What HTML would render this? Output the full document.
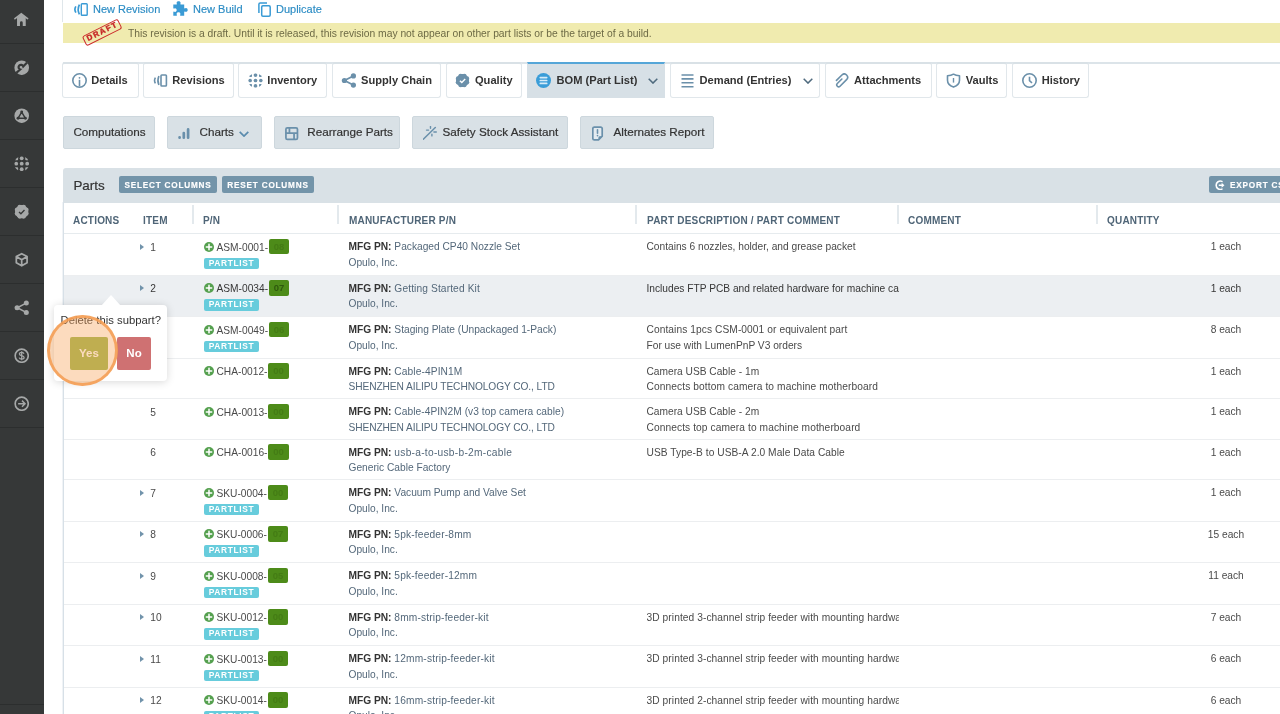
<!DOCTYPE html>
<html lang="en">
<head>
<meta charset="utf-8">
<title>BOM (Part List)</title>
<style>
*{box-sizing:border-box;margin:0;padding:0}
html,body{width:1280px;height:714px;overflow:hidden;background:#fff}
body{font-family:"Liberation Sans",sans-serif;font-size:11px;color:#4a4a4a;position:relative}
#wrap{position:absolute;left:0;top:0;width:1280px;height:714px;will-change:transform}
.abs{position:absolute}
/* sidebar */
#side{position:absolute;left:0;top:0;width:44px;height:714px;background:#363838;z-index:5}
#side .cell{position:absolute;left:0;width:44px;height:48px;border-bottom:1px solid #2c2e2e}
#side svg{position:absolute;left:13.650px;top:15.850px;width:15.400px;height:15.400px}
/* top links */
#leftline{position:absolute;left:62px;top:0;width:1px;height:22px;background:#dfe6ea}
.toplink{position:absolute;top:1px;height:16px;line-height:16px;font-size:11px;color:#2b8cc4;white-space:nowrap;-webkit-text-stroke:.15px #2b8cc4}
.topico{position:absolute}
#banner{position:absolute;left:63px;top:23px;width:1217px;height:20px;background:#f0ebaf}
#banner .msg{position:absolute;left:65px;top:-.2px;line-height:21px;font-size:10.3px;color:#6d6a45;white-space:nowrap}
#stamp{position:absolute;left:81.600px;top:27.200px;width:40px;height:10.500px;border:1.700px solid #cb2b2b;-webkit-text-stroke:.35px #c62626;border-radius:2.500px;color:#c62626;font-size:7.800px;font-weight:bold;letter-spacing:1.500px;line-height:7.900px;text-align:center;padding-left:1.500px;transform:rotate(-26.700deg);transform-origin:50% 50%}
/* tabs */
#tabline{position:absolute;left:63px;top:62px;width:1217px;height:2px;background:#dce4e9}
.tab{position:absolute;top:62px;height:36px;border:1px solid #e1e7eb;border-top:2px solid #d9e1e6;border-radius:3px;background:#fff;font-weight:bold;font-size:12px;color:#333;white-space:nowrap}
.tab span{position:absolute;top:7.700px;line-height:16px;font-size:11.100px}
.tab svg{position:absolute}
.tab.on{background:#d7e0e6;border-color:#d7e0e6;border-top:2px solid #55a6d8;border-radius:0}
/* toolbar buttons */
.tbtn{position:absolute;top:116px;height:33px;background:#d9e1e6;border:1px solid #cdd7dd;border-radius:2px;font-size:12px;color:#333;white-space:nowrap}
.tbtn span{position:absolute;top:7.400px;line-height:16px;font-size:11.700px;-webkit-text-stroke:.2px #333}
.tbtn svg{position:absolute}
/* panel */
#phead{position:absolute;left:63px;top:168px;width:1217px;height:34.500px;background:#d9e1e6;border-top-left-radius:3px}
#pleft{position:absolute;left:62px;top:202px;width:2px;height:512px;background:linear-gradient(90deg,#f0f3f6 1px,#d7e0e7 1px)}
.ptitle{position:absolute;left:73.400px;top:175.500px;-webkit-text-stroke:.2px #333;line-height:20px;font-size:13.400px;color:#333}
.sbtn{position:absolute;top:176.400px;height:16.800px;-webkit-text-stroke:.15px #fff;line-height:20.400px;overflow:hidden;background:#7394a9;border-radius:2px;color:#fff;font-weight:bold;font-size:8.200px;letter-spacing:.8px;text-align:center;white-space:nowrap}
#thead{position:absolute;left:0;top:202px;width:1280px;height:32px}
#thead::after{content:"";position:absolute;left:64px;right:0;bottom:0;height:1px;background:#e6ebee}
#thead span{position:absolute;top:11.800px;line-height:14px;font-size:10px;letter-spacing:.2px;font-weight:bold;color:#4f6577;white-space:nowrap}
#thead i{position:absolute;top:3px;width:2px;height:19px;background:#e3e9ed}
#rows{position:absolute;left:64px;top:234px;width:1216px}
.row{position:relative;height:41.500px;margin-left:-64px;width:1280px;background:transparent}
.row::after{content:"";position:absolute;left:64px;right:0;bottom:0;height:1px;background:#eceef0}
.row.s{height:40.500px}
.row.hl{background:linear-gradient(90deg,transparent 64px,#eceff2 64px)}
.row span{position:absolute;white-space:nowrap;line-height:14px;font-size:10.200px;color:#4a4a4a}
.row.hl .d1,.row.hl .q,.row.hl .num,.row.hl .pn{color:#363636}
.row.hl .rev{color:#2f5a0e}
.row .tri{position:absolute;left:140.200px;top:9.700px;width:0;height:0;border-left:4.600px solid #7193ab;border-top:3.700px solid transparent;border-bottom:3.700px solid transparent}
.row .num{left:150.300px;top:6.700px}
.row .plus{position:absolute;left:203.700px;top:7.600px;width:10px;height:10px}
.row .pn{left:216.500px;top:6.500px}
.row .rev{display:inline-block;vertical-align:top;margin-top:-1.600px;margin-left:1px;width:20.200px;height:15.5px;line-height:15.5px;background:#4d8b19;border-radius:2px;color:#447c15;font-size:9.500px;text-align:center;font-weight:bold}
.row .pl{left:204px;top:23.900px;width:55px;height:11.300px;line-height:10.700px;background:#67ccdc;border-radius:2px;color:#fff;font-weight:bold;font-size:8.400px;letter-spacing:.66px;text-align:center}
.row .m1{left:348.500px;top:6.300px;color:#54687a}
.row .m1 b{color:#333}
.row .m1 em{font-style:normal}
.row .m2{left:348.500px;top:21.700px;color:#54687a}
.row .d1{left:646.500px;top:6.300px;width:252px;overflow:hidden}
.row .d2{left:646.500px;top:21.700px;width:252px;overflow:hidden}
.row .q{left:1196px;top:6.300px;width:60px;text-align:center}
/* popover */
#pop{position:absolute;left:54px;top:305px;width:112.500px;height:75.500px;background:#fff;border-radius:4px;box-shadow:0 1px 8px rgba(0,0,0,.16);z-index:6}
#pop i{position:absolute;left:46.500px;top:-10.500px;width:0;height:0;border-left:10.500px solid transparent;border-right:10.500px solid transparent;border-bottom:11px solid #fff}
#pop .t{position:absolute;left:6.500px;top:7px;line-height:16px;font-size:11.300px;color:#333;white-space:nowrap}
#pop .y,#pop .n{position:absolute;top:32px;height:32.500px;line-height:32.500px;text-align:center;font-weight:bold;font-size:11.500px;border-radius:2px}
#pop .y{left:16px;width:38px;background:#9db74e;color:#fff}
#pop .n{left:63px;width:34px;background:#cf7172;color:#fff}
#ring{position:absolute;left:46.900px;top:314.700px;width:70.800px;height:71.500px;border-radius:50%;border:3px solid rgba(245,158,84,.88);background:rgba(247,160,84,.38);z-index:7}
</style>
</head>
<body>
<div id="wrap">
<div id="side">
  <div class="cell" style="top:-4px"><svg viewBox="0 0 16 16"><path fill="#a6a8a8" d="M3.150 5.800 7.600 2.200 12.200 5.800V14.500H9.100V11.100a1.450 1.450 0 0 0-2.900 0V14.500H3.150z"/><path d="M1 6.900 7.600 1.900 14.100 6.800" fill="none" stroke="#a6a8a8" stroke-width="1.700" stroke-linecap="round" stroke-linejoin="miter"/></svg></div>
  <div class="cell" style="top:44px"><svg viewBox="0 0 16 16"><circle cx="8" cy="8" r="7.6" fill="#a6a8a8"/><path d="M2.400 13.400 6.400 9.900a2.500 2.500 0 1 1 3.200-3.200L13.600 2.600" fill="none" stroke="#363838" stroke-width="2.300"/></svg></div>
  <div class="cell" style="top:92px"><svg viewBox="0 0 16 16"><circle cx="8" cy="8" r="7.6" fill="#a6a8a8"/><path d="M8 4.2 4.3 10.6h7.4z" fill="none" stroke="#363838" stroke-width="1.5" stroke-linejoin="round"/><circle cx="8" cy="4.2" r="1.5" fill="#363838"/><circle cx="4.2" cy="10.6" r="1.5" fill="#363838"/><circle cx="11.8" cy="10.6" r="1.5" fill="#363838"/></svg></div>
  <div class="cell" style="top:140px"><svg viewBox="0 0 16 16"><clipPath id="cc"><circle cx="8" cy="8" r="7.800"/></clipPath><g clip-path="url(#cc)" fill="#a6a8a8"><rect x=".3" y=".3" width="4" height="4" rx=".9"/><circle cx="8" cy="2.300" r="2"/><rect x="11.700" y=".3" width="4" height="4" rx=".9"/><circle cx="2.300" cy="8" r="2"/><circle cx="8" cy="8" r="2"/><circle cx="13.700" cy="8" r="2"/><rect x=".3" y="11.700" width="4" height="4" rx=".9"/><circle cx="8" cy="13.700" r="2"/><rect x="11.700" y="11.700" width="4" height="4" rx=".9"/></g></svg></div>
  <div class="cell" style="top:188px"><svg viewBox="0 0 16 16"><circle cx="8.00" cy="8.00" r="6.90" fill="#a6a8a8"/><circle cx="12.71" cy="9.95" r="2.50" fill="#a6a8a8"/><circle cx="9.95" cy="12.71" r="2.50" fill="#a6a8a8"/><circle cx="6.05" cy="12.71" r="2.50" fill="#a6a8a8"/><circle cx="3.29" cy="9.95" r="2.50" fill="#a6a8a8"/><circle cx="3.29" cy="6.05" r="2.50" fill="#a6a8a8"/><circle cx="6.05" cy="3.29" r="2.50" fill="#a6a8a8"/><circle cx="9.95" cy="3.29" r="2.50" fill="#a6a8a8"/><circle cx="12.71" cy="6.05" r="2.50" fill="#a6a8a8"/><path d="M5.2 8.3 7.2 10.2 10.9 6.3" fill="none" stroke="#363838" stroke-width="1.4"/></svg></div>
  <div class="cell" style="top:236px"><svg viewBox="0 0 16 16"><path d="M8 1.700 13.600 4.800v6.400L8 14.300 2.400 11.200V4.800zM2.400 4.800 8 8l5.600-3.200M8 8v6.300" fill="none" stroke="#a6a8a8" stroke-width="1.800" stroke-linejoin="round"/></svg></div>
  <div class="cell" style="top:284px"><svg viewBox="0 0 16 16"><path d="M12.6 3.2 3.4 8l9.2 4.8" fill="none" stroke="#a6a8a8" stroke-width="1.6"/><circle cx="12.8" cy="3.1" r="2.6" fill="#a6a8a8"/><circle cx="3.2" cy="8" r="2.6" fill="#a6a8a8"/><circle cx="12.8" cy="12.9" r="2.6" fill="#a6a8a8"/></svg></div>
  <div class="cell" style="top:332px"><svg viewBox="0 0 16 16"><circle cx="8" cy="8" r="6.800" fill="none" stroke="#a6a8a8" stroke-width="1.700"/><path d="M10.4 5.9C10 4.9 9 4.6 8 4.6c-1.4 0-2.4.6-2.4 1.7 0 2.4 4.9 1 4.9 3.5 0 1-1 1.7-2.5 1.7-1.200 0-2.200-.4-2.600-1.500M8 3.300v9.400" fill="none" stroke="#a6a8a8" stroke-width="1.3"/></svg></div>
  <div class="cell" style="top:380px"><svg viewBox="0 0 16 16"><circle cx="8" cy="8" r="6.800" fill="none" stroke="#a6a8a8" stroke-width="1.700"/><path d="M4.300 8h7M8.300 4.800 11.500 8 8.300 11.200" fill="none" stroke="#a6a8a8" stroke-width="1.5"/></svg></div>
  <div class="cell" style="top:657px"></div>
</div>

<div id="leftline"></div>
<svg class="topico" viewBox="0 0 15 13" style="left:73px;top:2.500px;width:15px;height:13px"><rect x="8.300" y=".7" width="5.900" height="11.600" rx=".8" fill="none" stroke="#3a9bd5" stroke-width="1.400"/><path d="M6.400 1.600Q4 6.500 6.400 11.400" fill="none" stroke="#3a9bd5" stroke-width="1.700"/><path d="M2.900 3.400Q.9 6.500 2.900 9.600" fill="none" stroke="#3a9bd5" stroke-width="1.700"/></svg><svg class="topico" viewBox="0 0 15 15" style="left:172.700px;top:1.300px;width:15px;height:15px"><path fill="#3a9bd5" d="M5.600 0.300c1.200 0 2 .7 2 1.600 0 .5-.3.800-.3 1.200 0 .3.200.5.600.5h3.300v3.200c0 .4.200.6.500.6.400 0 .7-.4 1.300-.4 1 0 1.700.8 1.700 1.900s-.7 1.900-1.700 1.900c-.6 0-.9-.4-1.300-.4-.3 0-.5.200-.5.600v3.700H7.600c-.4 0-.6-.2-.6-.5 0-.4.400-.7.400-1.300 0-.9-.8-1.600-1.900-1.600s-1.900.7-1.900 1.600c0 .6.400.9.400 1.300 0 .3-.2.500-.6.500H.3v-3.500c0-.4.200-.6.500-.6.400 0 .7.400 1.300.4.900 0 1.600-.8 1.600-1.900S3 7.200 2.100 7.200c-.6 0-.9.400-1.300.4-.3 0-.5-.2-.5-.6V3.600h3.100c.4 0 .6-.2.6-.5 0-.4-.4-.7-.4-1.200 0-.9.800-1.600 2-1.600z"/></svg><svg class="topico" viewBox="0 0 13 15" style="left:257.500px;top:1.500px;width:13px;height:15px"><rect x="3.700" y="3.700" width="8.500" height="10.500" rx="1.200" fill="none" stroke="#3a9bd5" stroke-width="1.500"/><path d="M9 1H2.200A1.300 1.300 0 0 0 .9 2.300V11" fill="none" stroke="#3a9bd5" stroke-width="1.500"/></svg>
<div class="toplink" style="left:93px">New Revision</div>
<div class="toplink" style="left:193px">New Build</div>
<div class="toplink" style="left:276px">Duplicate</div>

<div id="banner"><div class="msg">This revision is a draft. Until it is released, this revision may not appear on other part lists or be the target of a build.</div></div>
<div id="stamp">DRAFT</div>

<div id="tabline"></div>
<div class="tab" style="left:62px;width:76.500px"><svg viewBox="0 0 15 15" style="left:8.5px;top:8.8px;width:15px;height:15px"><circle cx="7.500" cy="7.500" r="6.700" fill="none" stroke="#6b90aa" stroke-width="1.600"/><circle cx="7.500" cy="4.800" r=".9" fill="#6b90aa"/><path d="M7.500 6.800v6.600" stroke="#6b90aa" stroke-width="1.600"/></svg><span style="left:28.300px">Details</span></div>
<div class="tab" style="left:143px;width:90.5px"><svg viewBox="0 0 15 15" style="left:8.5px;top:8.8px;width:15px;height:15px"><rect x="8" y="2" width="5.400" height="11" rx=".8" fill="none" stroke="#6b90aa" stroke-width="1.600"/><path d="M5.900 3Q3.900 7.500 5.900 12" fill="none" stroke="#6b90aa" stroke-width="1.600"/><path d="M2.400 4.600Q.7 7.500 2.400 10.400" fill="none" stroke="#6b90aa" stroke-width="1.600"/></svg><span style="left:28.300px">Revisions</span></div>
<div class="tab" style="left:238px;width:89px"><svg viewBox="0 0 15 15" style="left:8.5px;top:8.8px;width:15px;height:15px"><clipPath id="c2"><circle cx="7.500" cy="7.500" r="7.300"/></clipPath><g clip-path="url(#c2)" fill="#6b90aa"><rect x=".3" y=".3" width="3.700" height="3.700" rx=".8"/><circle cx="7.500" cy="2.100" r="1.850"/><rect x="11" y=".3" width="3.700" height="3.700" rx=".8"/><circle cx="2.100" cy="7.500" r="1.850"/><circle cx="7.500" cy="7.500" r="1.850"/><circle cx="12.900" cy="7.500" r="1.850"/><rect x=".3" y="11" width="3.700" height="3.700" rx=".8"/><circle cx="7.500" cy="12.900" r="1.850"/><rect x="11" y="11" width="3.700" height="3.700" rx=".8"/></g></svg><span style="left:28.300px">Inventory</span></div>
<div class="tab" style="left:331.8px;width:109.1px"><svg viewBox="0 0 15 15" style="left:8.5px;top:8.8px;width:15px;height:15px"><path d="M12.300 3 3.500 7.500l8.800 4.500" fill="none" stroke="#6b90aa" stroke-width="1.800"/><circle cx="12.400" cy="2.900" r="2.600" fill="#6b90aa"/><circle cx="3.400" cy="7.500" r="2.600" fill="#6b90aa"/><circle cx="12.400" cy="12.100" r="2.600" fill="#6b90aa"/></svg><span style="left:28.300px">Supply Chain</span></div>
<div class="tab" style="left:445.7px;width:76.2px"><svg viewBox="0 0 15 15" style="left:8.5px;top:8.8px;width:15px;height:15px"><circle cx="7.50" cy="7.50" r="6.45" fill="#6b90aa"/><circle cx="11.89" cy="9.32" r="2.35" fill="#6b90aa"/><circle cx="9.32" cy="11.89" r="2.35" fill="#6b90aa"/><circle cx="5.68" cy="11.89" r="2.35" fill="#6b90aa"/><circle cx="3.11" cy="9.32" r="2.35" fill="#6b90aa"/><circle cx="3.11" cy="5.68" r="2.35" fill="#6b90aa"/><circle cx="5.68" cy="3.11" r="2.35" fill="#6b90aa"/><circle cx="9.32" cy="3.11" r="2.35" fill="#6b90aa"/><circle cx="11.89" cy="5.68" r="2.35" fill="#6b90aa"/><path d="M4.900 7.700 6.800 9.500 10.200 5.900" fill="none" stroke="#fff" stroke-width="1.400"/></svg><span style="left:28.300px">Quality</span></div>
<div class="tab on" style="left:527.3px;width:137.7px"><svg viewBox="0 0 15 15" style="left:7.700px;top:8.800px;width:15px;height:15px"><circle cx="7.500" cy="7.500" r="7.500" fill="#3a9dd8"/><path d="M4.300 4.600h6.400M4.300 7.500h6.400M4.300 10.400h6.400" stroke="#d6ecf8" stroke-width="1.700" stroke-linecap="round"/></svg><span style="left:28.300px">BOM (Part List)</span><svg viewBox="0 0 10 6" style="left:119.500px;top:13.700px;width:10px;height:6px"><path d="M.7.800 5 5.100 9.300.8" fill="none" stroke="#4f6a7e" stroke-width="1.500"/></svg></div>
<div class="tab" style="left:670.3px;width:149.5px"><svg viewBox="0 0 15 15" style="left:8.5px;top:8.8px;width:15px;height:15px"><path d="M1.500 2h12M1.500 5.900h12M1.500 9.800h12M1.500 13.700h12" stroke="#6b90aa" stroke-width="1.600"/></svg><span style="left:28.300px">Demand (Entries)</span><svg viewBox="0 0 10 6" style="left:131.300px;top:13.700px;width:10px;height:6px"><path d="M.7.800 5 5.100 9.300.8" fill="none" stroke="#4f6a7e" stroke-width="1.500"/></svg></div>
<div class="tab" style="left:824.7px;width:106.9px"><svg viewBox="0 0 15 15" style="left:8.5px;top:8.8px;width:15px;height:15px"><g transform="translate(10.250 4.300) rotate(45)"><path d="M-3.300 7.700V0A3.300 3.300 0 0 1 3.300 0V9.300A1.900 1.900 0 0 1-.5 9.300V2.900" fill="none" stroke="#6b90aa" stroke-width="1.600" stroke-linecap="round"/></g></svg><span style="left:28.300px">Attachments</span></div>
<div class="tab" style="left:936.4px;width:70.8px"><svg viewBox="0 0 15 15" style="left:8.5px;top:8.8px;width:15px;height:15px"><path d="M7.500 1.200C5.800 2.300 3.800 2.700 1.500 2.700v4.500c0 3.300 2.400 5.600 6 6.900 3.600-1.300 6-3.600 6-6.900V2.700c-2.300 0-4.300-.4-6-1.500z" fill="none" stroke="#6b90aa" stroke-width="1.600" stroke-linejoin="round"/><path d="M7.500 5v4.600" stroke="#6b90aa" stroke-width="1.400"/></svg><span style="left:28.300px">Vaults</span></div>
<div class="tab" style="left:1012.4px;width:76.6px"><svg viewBox="0 0 15 15" style="left:8.5px;top:8.8px;width:15px;height:15px"><circle cx="7.500" cy="7.500" r="6.700" fill="none" stroke="#6b90aa" stroke-width="1.600"/><path d="M7.500 3.800v3.900l2.500 2.300" fill="none" stroke="#6b90aa" stroke-width="1.600"/></svg><span style="left:28.300px">History</span></div>

<div class="tbtn" style="left:62.9px;width:91.7px"><span style="left:9.5px">Computations</span></div>
<div class="tbtn" style="left:167.2px;width:94.5px"><svg viewBox="0 0 12 13" style="left:10.300px;top:10.500px;width:12px;height:13px"><path d="M1.600 9.300v.4M5.800 5.100v4.600M10.100 1.400v8.300" stroke="#6a90ab" stroke-width="2.700" stroke-linecap="round"/></svg><span style="left:31.300px">Charts</span><svg viewBox="0 0 10 6" style="left:71px;top:13.900px;width:10px;height:6px"><path d="M.7.800 5 5.100 9.300.8" fill="none" stroke="#5a8bad" stroke-width="1.700"/></svg></div>
<div class="tbtn" style="left:274px;width:125.8px"><svg viewBox="0 0 13 13" style="left:10.200px;top:10.300px;width:13.400px;height:13.400px"><rect x=".9" y=".9" width="11.200" height="11.200" rx="1.400" fill="none" stroke="#6a90ab" stroke-width="1.700"/><path d="M.9 5.900h11.200M4.300.9v5M8.800 5.900v6.200" stroke="#6a90ab" stroke-width="1.700"/></svg><span style="left:32.2px">Rearrange Parts</span></div>
<div class="tbtn" style="left:412px;width:155.5px"><svg viewBox="0 0 15 15" style="left:10px;top:9px;width:15px;height:15px"><path d="M.3 13.300 12.300 1.500" stroke="#6a90ab" stroke-width="1.500" stroke-linecap="round"/><path d="M7.500.4v1.900M3.500 4.100h2.100M10.900 6h2.400M8.900 8.300v1.600" stroke="#6a90ab" stroke-width="1.400" stroke-linecap="round"/></svg><span style="left:29.5px">Safety Stock Assistant</span></div>
<div class="tbtn" style="left:580px;width:133.5px"><svg viewBox="0 0 12 15" style="left:11px;top:8.500px;width:12px;height:15px"><path d="M2.300 1.100h6.400a1.500 1.500 0 0 1 1.500 1.500v7.600l-3.700 3.700H2.300a1.500 1.500 0 0 1-1.500-1.500V2.600a1.500 1.500 0 0 1 1.500-1.500z" fill="#e4ebf0" stroke="#6a90ab" stroke-width="1.700" stroke-linejoin="round"/><path d="M10.200 10.200H7.700a1.200 1.200 0 0 0-1.200 1.200v2.500z" fill="#6a90ab"/><path d="M5.500 3.700v3.500" stroke="#6a90ab" stroke-width="1.600" stroke-linecap="round"/><circle cx="5.500" cy="9.600" r=".85" fill="#6a90ab"/></svg><span style="left:32.5px">Alternates Report</span></div>

<!--PANEL_START-->
<div id="phead"></div>
<div id="pleft"></div>
<div class="ptitle">Parts</div>
<div class="sbtn" style="left:119px;width:98px">SELECT COLUMNS</div>
<div class="sbtn" style="left:222px;width:92px">RESET COLUMNS</div>
<div class="sbtn" style="left:1209px;width:90px;text-align:left;padding-left:21px">EXPORT CSV<svg viewBox="0 0 10 10" style="position:absolute;left:6.300px;top:3.400px;width:10.500px;height:10.500px"><path d="M6.6 1.3A4 4 0 1 0 6.6 8.7" fill="none" stroke="#fff" stroke-width="1.5" stroke-linecap="round"/><path d="M3.6 5h3.2" stroke="#fff" stroke-width="1.5"/><path d="M6.3 2.6 9 5 6.3 7.4z" fill="#fff"/></svg></div>

<div id="thead">
  <span style="left:73px">ACTIONS</span>
  <span style="left:143px">ITEM</span>
  <span style="left:203px">P/N</span>
  <span style="left:349px">MANUFACTURER P/N</span>
  <span style="left:647px">PART DESCRIPTION / PART COMMENT</span>
  <span style="left:908px">COMMENT</span>
  <span style="left:1107px">QUANTITY</span>
  <i style="left:192px"></i><i style="left:337px"></i><i style="left:635px"></i><i style="left:897px"></i><i style="left:1096px"></i>
</div>
<div id="rows">
<div class="row"><i class="tri"></i><span class="num">1</span><svg class="plus" viewBox="0 0 10 10"><circle cx="5" cy="5" r="5" fill="#55a04f"/><path d="M5 2.3v5.4M2.3 5h5.4" stroke="#fff" stroke-width="1.5" stroke-linecap="round"/></svg><span class="pn">ASM-0001-<b class="rev">08</b></span><span class="pl">PARTLIST</span><span class="m1"><b>MFG PN:</b> Packaged CP40 Nozzle Set</span><span class="m2">Opulo, Inc.</span><span class="d1">Contains 6 nozzles, holder, and grease packet</span><span class="q">1 each</span></div>
<div class="row hl"><i class="tri"></i><span class="num">2</span><svg class="plus" viewBox="0 0 10 10"><circle cx="5" cy="5" r="5" fill="#55a04f"/><path d="M5 2.3v5.4M2.3 5h5.4" stroke="#fff" stroke-width="1.5" stroke-linecap="round"/></svg><span class="pn">ASM-0034-<b class="rev">07</b></span><span class="pl">PARTLIST</span><span class="m1"><b>MFG PN:</b> <em style="letter-spacing:0.12px">Getting Started Kit</em></span><span class="m2">Opulo, Inc.</span><span class="d1">Includes FTP PCB and related hardware for machine calibration</span><span class="q">1 each</span></div>
<div class="row"><svg class="plus" viewBox="0 0 10 10"><circle cx="5" cy="5" r="5" fill="#55a04f"/><path d="M5 2.3v5.4M2.3 5h5.4" stroke="#fff" stroke-width="1.5" stroke-linecap="round"/></svg><span class="pn">ASM-0049-<b class="rev">06</b></span><span class="pl">PARTLIST</span><span class="m1"><b>MFG PN:</b> Staging Plate (Unpackaged 1-Pack)</span><span class="m2">Opulo, Inc.</span><span class="d1" style="letter-spacing:0.08px">Contains 1pcs CSM-0001 or equivalent part</span><span class="d2">For use with LumenPnP V3 orders</span><span class="q">8 each</span></div>
<div class="row s"><svg class="plus" viewBox="0 0 10 10"><circle cx="5" cy="5" r="5" fill="#55a04f"/><path d="M5 2.3v5.4M2.3 5h5.4" stroke="#fff" stroke-width="1.5" stroke-linecap="round"/></svg><span class="pn">CHA-0012-<b class="rev">00</b></span><span class="m1"><b>MFG PN:</b> <em style="letter-spacing:0.1px">Cable-4PIN1M</em></span><span class="m2" style="letter-spacing:-.09px">SHENZHEN AILIPU TECHNOLOGY CO., LTD</span><span class="d1">Camera USB Cable - 1m</span><span class="d2" style="letter-spacing:0.1px">Connects bottom camera to machine motherboard</span><span class="q">1 each</span></div>
<div class="row s"><span class="num">5</span><svg class="plus" viewBox="0 0 10 10"><circle cx="5" cy="5" r="5" fill="#55a04f"/><path d="M5 2.3v5.4M2.3 5h5.4" stroke="#fff" stroke-width="1.5" stroke-linecap="round"/></svg><span class="pn">CHA-0013-<b class="rev">00</b></span><span class="m1"><b>MFG PN:</b> <em style="letter-spacing:0.05px">Cable-4PIN2M (v3 top camera cable)</em></span><span class="m2" style="letter-spacing:-.09px">SHENZHEN AILIPU TECHNOLOGY CO., LTD</span><span class="d1">Camera USB Cable - 2m</span><span class="d2" style="letter-spacing:0.09px">Connects top camera to machine motherboard</span><span class="q">1 each</span></div>
<div class="row s"><span class="num">6</span><svg class="plus" viewBox="0 0 10 10"><circle cx="5" cy="5" r="5" fill="#55a04f"/><path d="M5 2.3v5.4M2.3 5h5.4" stroke="#fff" stroke-width="1.5" stroke-linecap="round"/></svg><span class="pn">CHA-0016-<b class="rev">00</b></span><span class="m1"><b>MFG PN:</b> <em style="letter-spacing:0.27px">usb-a-to-usb-b-2m-cable</em></span><span class="m2">Generic Cable Factory</span><span class="d1" style="letter-spacing:0.05px">USB Type-B to USB-A 2.0 Male Data Cable</span><span class="q">1 each</span></div>
<div class="row"><i class="tri"></i><span class="num">7</span><svg class="plus" viewBox="0 0 10 10"><circle cx="5" cy="5" r="5" fill="#55a04f"/><path d="M5 2.3v5.4M2.3 5h5.4" stroke="#fff" stroke-width="1.5" stroke-linecap="round"/></svg><span class="pn">SKU-0004-<b class="rev">00</b></span><span class="pl">PARTLIST</span><span class="m1"><b>MFG PN:</b> Vacuum Pump and Valve Set</span><span class="m2">Opulo, Inc.</span><span class="q">1 each</span></div>
<div class="row"><i class="tri"></i><span class="num">8</span><svg class="plus" viewBox="0 0 10 10"><circle cx="5" cy="5" r="5" fill="#55a04f"/><path d="M5 2.3v5.4M2.3 5h5.4" stroke="#fff" stroke-width="1.5" stroke-linecap="round"/></svg><span class="pn">SKU-0006-<b class="rev">07</b></span><span class="pl">PARTLIST</span><span class="m1"><b>MFG PN:</b> <em style="letter-spacing:0.17px">5pk-feeder-8mm</em></span><span class="m2">Opulo, Inc.</span><span class="q">15 each</span></div>
<div class="row"><i class="tri"></i><span class="num">9</span><svg class="plus" viewBox="0 0 10 10"><circle cx="5" cy="5" r="5" fill="#55a04f"/><path d="M5 2.3v5.4M2.3 5h5.4" stroke="#fff" stroke-width="1.5" stroke-linecap="round"/></svg><span class="pn">SKU-0008-<b class="rev">05</b></span><span class="pl">PARTLIST</span><span class="m1"><b>MFG PN:</b> <em style="letter-spacing:0.16px">5pk-feeder-12mm</em></span><span class="m2">Opulo, Inc.</span><span class="q">11 each</span></div>
<div class="row"><i class="tri"></i><span class="num">10</span><svg class="plus" viewBox="0 0 10 10"><circle cx="5" cy="5" r="5" fill="#55a04f"/><path d="M5 2.3v5.4M2.3 5h5.4" stroke="#fff" stroke-width="1.5" stroke-linecap="round"/></svg><span class="pn">SKU-0012-<b class="rev">00</b></span><span class="pl">PARTLIST</span><span class="m1"><b>MFG PN:</b> <em style="letter-spacing:0.16px">8mm-strip-feeder-kit</em></span><span class="m2">Opulo, Inc.</span><span class="d1" style="letter-spacing:0.08px">3D printed 3-channel strip feeder with mounting hardware</span><span class="q">7 each</span></div>
<div class="row"><i class="tri"></i><span class="num">11</span><svg class="plus" viewBox="0 0 10 10"><circle cx="5" cy="5" r="5" fill="#55a04f"/><path d="M5 2.3v5.4M2.3 5h5.4" stroke="#fff" stroke-width="1.5" stroke-linecap="round"/></svg><span class="pn">SKU-0013-<b class="rev">00</b></span><span class="pl">PARTLIST</span><span class="m1"><b>MFG PN:</b> <em style="letter-spacing:0.17px">12mm-strip-feeder-kit</em></span><span class="m2">Opulo, Inc.</span><span class="d1" style="letter-spacing:0.08px">3D printed 3-channel strip feeder with mounting hardware</span><span class="q">6 each</span></div>
<div class="row"><i class="tri"></i><span class="num">12</span><svg class="plus" viewBox="0 0 10 10"><circle cx="5" cy="5" r="5" fill="#55a04f"/><path d="M5 2.3v5.4M2.3 5h5.4" stroke="#fff" stroke-width="1.5" stroke-linecap="round"/></svg><span class="pn">SKU-0014-<b class="rev">00</b></span><span class="pl">PARTLIST</span><span class="m1"><b>MFG PN:</b> <em style="letter-spacing:0.17px">16mm-strip-feeder-kit</em></span><span class="m2">Opulo, Inc.</span><span class="d1" style="letter-spacing:0.08px">3D printed 2-channel strip feeder with mounting hardware</span><span class="q">6 each</span></div>
</div>

<!--PANEL_END-->
<div id="pop"><i></i><span class="t">Delete this subpart?</span><span class="y">Yes</span><span class="n">No</span></div>
<div id="ring"></div>

</div>
</body>
</html>
